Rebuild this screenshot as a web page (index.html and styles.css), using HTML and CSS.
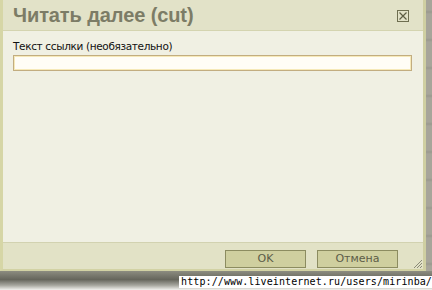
FILE: index.html
```html
<!DOCTYPE html>
<html>
<head>
<meta charset="utf-8">
<link rel="stylesheet" href="styles.css">
</head>
<body>
<div class="screen">
  <div class="row">
    <div class="dialog">
      <div class="titlebar">
        <span class="title">Читать далее (cut)</span>
        <span class="close"><svg width="12" height="12" viewBox="0 0 12 12"><rect x="0.5" y="0.5" width="11" height="11" fill="none" stroke="#6e6e50"/><path d="M2.5 2.5 L9.5 9.5 M9.5 2.5 L2.5 9.5" stroke="#5e5e44" stroke-width="1.2"/></svg></span>
      </div>
      <div class="content">
        <label class="label">Текст ссылки (необязательно)</label>
        <div class="input"></div>
      </div>
      <div class="footer">
        <button class="btn">OK</button>
        <button class="btn">Отмена</button>
        <svg class="grip" width="12" height="12" viewBox="0 0 12 12"><path d="M11 3 L3 11 M11 6 L6 11 M11 9 L9 11" stroke="#8a8a78" stroke-width="1"/></svg>
      </div>
    </div>
    <div class="behind"></div>
  </div>
  <div class="shadow">
    <span class="wm">http://www.liveinternet.ru/users/mirinba/</span>
  </div>
</div>
</body>
</html>
```
FILE: styles.css
```css
html, body { margin: 0; padding: 0; background: #ffffff; }
.screen { width: 432px; height: 290px; overflow: hidden; display: flex; flex-direction: column; }
.row { display: flex; height: 271px; }
.dialog {
  flex: 0 0 auto;
  width: 420px;
  display: flex; flex-direction: column;
  border-left: 3px solid #d6d6a6;
  border-right: 3px solid #cfcfa2;
  border-bottom: 2px solid #d2d2a4;
  background: #f0f0e3;
  box-sizing: content-box;
}
.titlebar {
  height: 30px;
  background: #e2e2c8;
  border-bottom: 1px solid #d4d4b0;
  display: flex; align-items: center; justify-content: space-between;
  padding: 0 14px 0 10px;
}
.title {
  font-family: "Liberation Sans", Arial, sans-serif;
  font-weight: bold; font-size: 20px; color: #7c7c66;
  margin-top: 1px; letter-spacing: -0.1px;
}
.close { display: flex; margin-top: 1px; }
.content { flex: 1; padding: 9px 11px 0 10px; display: flex; flex-direction: column; }
.label { font-family: "DejaVu Sans", Tahoma, sans-serif; font-size: 10.5px; color: #111; line-height: 13px; letter-spacing: -0.35px; }
.input {
  margin-top: 2px;
  height: 12px;
  border: 1px solid #c2ad80;
  box-shadow: inset 0 0 0 1px #f6e9b8;
  background: #fffdf6;
  padding: 1px;
}
.footer {
  height: 26px;
  background: #e2e2c6;
  border-top: 1px solid #d2d2b0;
  display: flex; align-items: center; justify-content: flex-end;
  padding: 0 25px 0 0; gap: 11px;
  position: relative;
}
.btn {
  width: 81px; height: 18px;
  background: #cfcf9f;
  border: 1px solid #8c8c60;
  font-family: "DejaVu Sans", Tahoma, sans-serif; font-size: 11px; color: #5c5c48;
  padding: 0; margin-top: 5px;
}
.grip { position: absolute; right: 0; bottom: 0; }
.behind {
  flex: 1; min-width: 0;
  background: repeating-linear-gradient(#a7a59a 0px, #a7a59a 10px, #9a998e 12px, #a7a59a 14px, #a7a59a 28px);
}
.shadow {
  flex: 1;
  background: linear-gradient(#8c8c80 0%, #66665c 45%, #a6a69e 75%, #f2f2ee 100%);
  display: flex; justify-content: flex-end; align-items: flex-start;
}
.wm {
  font-family: "DejaVu Sans Mono", monospace; font-size: 10px; color: #000;
  background: #ffffff; line-height: 12px; padding-left: 2px; margin-top: 5px;
  white-space: nowrap; letter-spacing: 0.1px;
}
```
